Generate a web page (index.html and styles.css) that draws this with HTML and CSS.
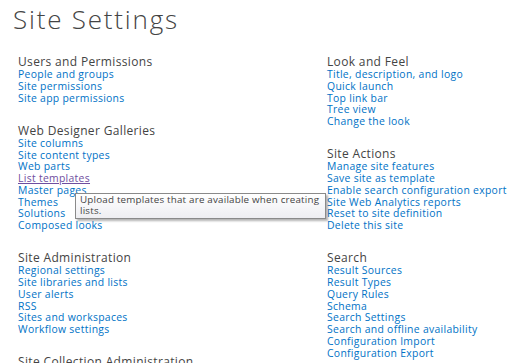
FILE: index.html
```html
<!DOCTYPE html>
<html>
<head>
<meta charset="utf-8">
<link rel="stylesheet" href="styles.css">
</head>
<body>
<div class="page">
  <h1 class="title">Site Settings</h1>
  <div class="columns">
    <div class="col">
      <section class="group">
        <h2>Users and Permissions</h2>
        <a href="#">People and groups</a>
        <a href="#">Site permissions</a>
        <a href="#">Site app permissions</a>
      </section>
      <section class="group">
        <h2>Web Designer Galleries</h2>
        <a href="#">Site columns</a>
        <a href="#">Site content types</a>
        <a href="#">Web parts</a>
        <a href="#" class="hover">List templates</a>
        <a href="#">Master pages</a>
        <a href="#">Themes</a>
        <a href="#">Solutions</a>
        <a href="#">Composed looks</a>
      </section>
      <section class="group">
        <h2>Site Administration</h2>
        <a href="#">Regional settings</a>
        <a href="#">Site libraries and lists</a>
        <a href="#">User alerts</a>
        <a href="#">RSS</a>
        <a href="#">Sites and workspaces</a>
        <a href="#">Workflow settings</a>
      </section>
      <section class="group">
        <h2>Site Collection Administration</h2>
      </section>
    </div>
    <div class="col">
      <section class="group">
        <h2>Look and Feel</h2>
        <a href="#">Title, description, and logo</a>
        <a href="#">Quick launch</a>
        <a href="#">Top link bar</a>
        <a href="#">Tree view</a>
        <a href="#">Change the look</a>
      </section>
      <section class="group">
        <h2>Site Actions</h2>
        <a href="#">Manage site features</a>
        <a href="#">Save site as template</a>
        <a href="#">Enable search configuration export</a>
        <a href="#">Site Web Analytics reports</a>
        <a href="#">Reset to site definition</a>
        <a href="#">Delete this site</a>
      </section>
      <section class="group">
        <h2>Search</h2>
        <a href="#">Result Sources</a>
        <a href="#">Result Types</a>
        <a href="#">Query Rules</a>
        <a href="#">Schema</a>
        <a href="#">Search Settings</a>
        <a href="#">Search and offline availability</a>
        <a href="#">Configuration Import</a>
        <a href="#">Configuration Export</a>
      </section>
    </div>
  </div>
  <div class="tooltip">Upload templates that are available when creating<br>lists.</div>
</div>
</body>
</html>
```

FILE: styles.css
```css
html, body {
  margin: 0;
  padding: 0;
  background: #fff;
  overflow: hidden;
}
.page {
  position: relative;
  width: 515px;
  height: 363px;
  font-family: "Open Sans", "Noto Sans", sans-serif;
}
.title {
  margin: 0;
  padding: 3px 0 0 13px;
  font-size: 26px;
  font-weight: 300;
  line-height: 32px;
  color: #444;
  letter-spacing: 1.8px;
}
.columns {
  display: grid;
  grid-template-columns: 309px 1fr;
  padding: 20px 0 0 18px;
}
.col {
  display: flex;
  flex-direction: column;
  gap: 19.5px;
}
.group {
  display: flex;
  flex-direction: column;
  align-items: flex-start;
}
.group h2 {
  margin: 0;
  font-size: 12px;
  font-weight: 400;
  line-height: 14px;
  color: #444;
  letter-spacing: 0.35px;
  white-space: nowrap;
}
.group a {
  font-size: 10.4px;
  line-height: 11.75px;
  color: #0072c6;
  text-decoration: none;
  white-space: nowrap;
  letter-spacing: 0.3px;
}
.group a.hover {
  color: #6f4ea0;
  text-decoration: underline;
}
.tooltip {
  position: absolute;
  left: 75px;
  top: 193px;
  padding: 1px 6px 2px 4px;
  font-size: 9.8px;
  line-height: 10.5px;
  letter-spacing: 0.2px;
  white-space: nowrap;
  color: #444;
  background: linear-gradient(#ffffff, #eeeef2);
  border: 1px solid #8a8a8a;
  box-shadow: 2px 2px 2px rgba(0,0,0,0.3);
}
```
